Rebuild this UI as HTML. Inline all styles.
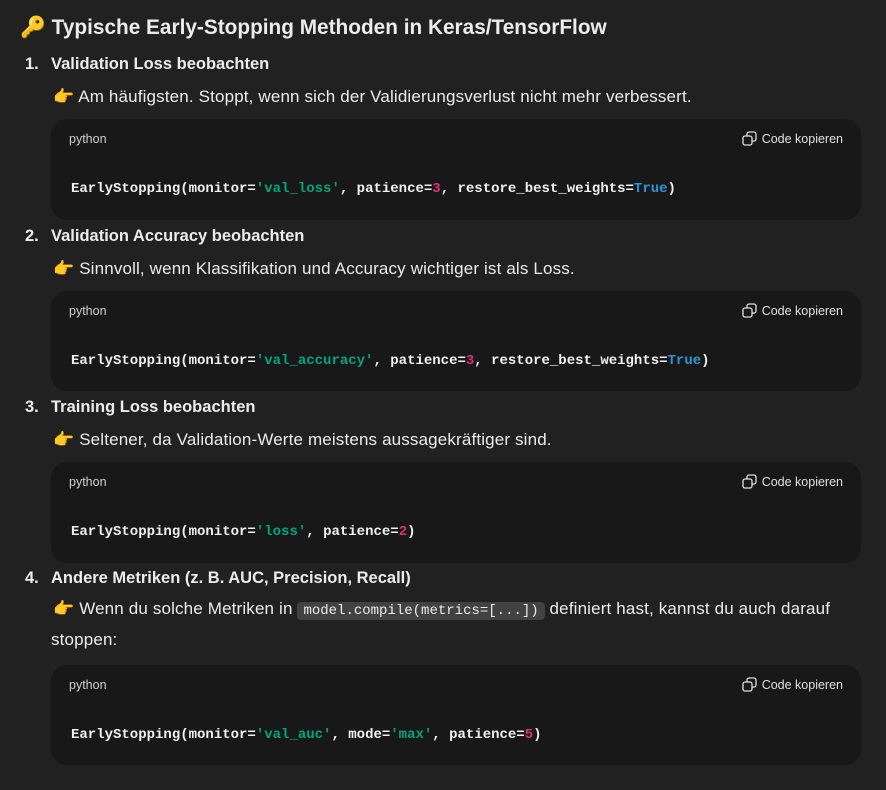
<!DOCTYPE html>
<html><head><meta charset="utf-8"><style>
body{margin:0;width:886px;height:790px;background:#212121;color:#ececec;font-family:"Liberation Sans",sans-serif;position:relative;overflow:hidden}
.a{position:absolute;white-space:nowrap}
h1{position:absolute;left:20px;top:16px;margin:0;font-size:20.8px;font-weight:bold;white-space:nowrap}
.h{font-size:16.5px;font-weight:bold}
.h b{position:absolute;left:26px;top:0}
.t{font-size:17px;letter-spacing:0.15px}
.blk{position:absolute;left:51px;width:810px;background:#181818;border-radius:16px}
.lang{position:absolute;left:18px;top:13px;font-size:12.5px;color:#d0d0d0}
.cp{position:absolute;right:18px;top:12px;font-size:12.5px;color:#e0e0e0;display:flex;align-items:center;gap:5px}
.code{position:absolute;left:20px;top:62px;font-family:"Liberation Mono",monospace;font-size:14px;font-weight:bold;color:#f0f0f0;white-space:pre}
.s{color:#00a67d}.m{color:#df3079}.k{color:#2e95d3}
.ic{display:inline-block;background:#424242;border-radius:4px;padding:1px 6px;font-family:"Liberation Mono",monospace;font-size:14px;letter-spacing:0}
</style></head><body>
<h1>🔑 Typische Early-Stopping Methoden in Keras/TensorFlow</h1>

<div class="a h" style="left:25px;top:55px">1.<b>Validation Loss beobachten</b></div>
<div class="a t" style="left:53px;top:87px">👉 Am häufigsten. Stoppt, wenn sich der Validierungsverlust nicht mehr verbessert.</div>
<div class="blk" style="top:119px;height:101px"><div class="lang">python</div><div class="cp"><svg width="15" height="15" viewBox="0 0 15 15" fill="none" stroke="#e0e0e0" stroke-width="1.3"><rect x="1" y="5" width="9" height="9" rx="2"/><path d="M5 5V3a2 2 0 0 1 2-2h5a2 2 0 0 1 2 2v5a2 2 0 0 1-2 2h-2"/></svg>Code kopieren</div><div class="code">EarlyStopping(monitor=<span class="s">'val_loss'</span>, patience=<span class="m">3</span>, restore_best_weights=<span class="k">True</span>)</div></div>

<div class="a h" style="left:25px;top:227px">2.<b>Validation Accuracy beobachten</b></div>
<div class="a t" style="left:53px;top:259px">👉 Sinnvoll, wenn Klassifikation und Accuracy wichtiger ist als Loss.</div>
<div class="blk" style="top:291px;height:100px"><div class="lang">python</div><div class="cp"><svg width="15" height="15" viewBox="0 0 15 15" fill="none" stroke="#e0e0e0" stroke-width="1.3"><rect x="1" y="5" width="9" height="9" rx="2"/><path d="M5 5V3a2 2 0 0 1 2-2h5a2 2 0 0 1 2 2v5a2 2 0 0 1-2 2h-2"/></svg>Code kopieren</div><div class="code">EarlyStopping(monitor=<span class="s">'val_accuracy'</span>, patience=<span class="m">3</span>, restore_best_weights=<span class="k">True</span>)</div></div>

<div class="a h" style="left:25px;top:398px">3.<b>Training Loss beobachten</b></div>
<div class="a t" style="left:53px;top:430px">👉 Seltener, da Validation-Werte meistens aussagekräftiger sind.</div>
<div class="blk" style="top:462px;height:101px"><div class="lang">python</div><div class="cp"><svg width="15" height="15" viewBox="0 0 15 15" fill="none" stroke="#e0e0e0" stroke-width="1.3"><rect x="1" y="5" width="9" height="9" rx="2"/><path d="M5 5V3a2 2 0 0 1 2-2h5a2 2 0 0 1 2 2v5a2 2 0 0 1-2 2h-2"/></svg>Code kopieren</div><div class="code">EarlyStopping(monitor=<span class="s">'loss'</span>, patience=<span class="m">2</span>)</div></div>

<div class="a h" style="left:25px;top:569px">4.<b>Andere Metriken (z. B. AUC, Precision, Recall)</b></div>
<div class="a t" style="left:53px;top:599px">👉 Wenn du solche Metriken in <span class="ic">model.compile(metrics=[...])</span> definiert hast, kannst du auch darauf</div>
<div class="a t" style="left:51px;top:630px">stoppen:</div>
<div class="blk" style="top:665px;height:100px"><div class="lang">python</div><div class="cp"><svg width="15" height="15" viewBox="0 0 15 15" fill="none" stroke="#e0e0e0" stroke-width="1.3"><rect x="1" y="5" width="9" height="9" rx="2"/><path d="M5 5V3a2 2 0 0 1 2-2h5a2 2 0 0 1 2 2v5a2 2 0 0 1-2 2h-2"/></svg>Code kopieren</div><div class="code">EarlyStopping(monitor=<span class="s">'val_auc'</span>, mode=<span class="s">'max'</span>, patience=<span class="m">5</span>)</div></div>
</body></html>
